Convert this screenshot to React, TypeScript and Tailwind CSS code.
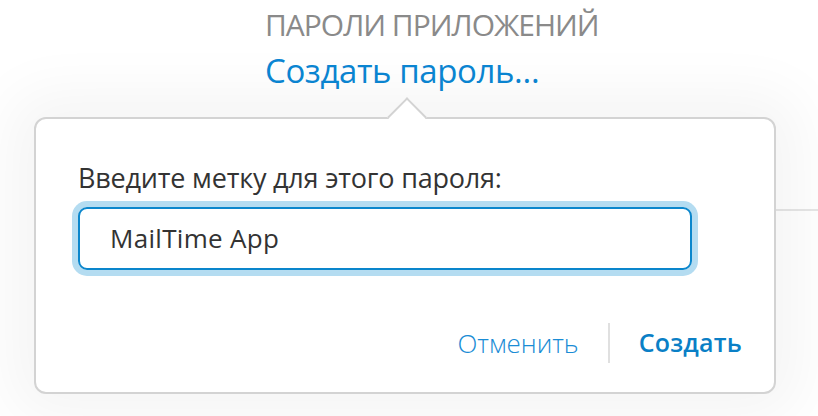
import React from "react";

export default function App() {
  const font = { fontFamily: '"Open Sans", "Noto Sans", sans-serif' };
  return (
    <div
      className="relative w-[818px] h-[416px] overflow-hidden bg-white"
      style={font}
    >
      {/* underlying page line to the right of the popover */}
      <div className="absolute left-[700px] right-0 top-[209px] h-[2px] bg-[#e6e6e6]" />

      <div className="relative flex flex-col pl-[265px] pt-[5px]">
        <div className="text-[30px] leading-[40px] text-[#8a8a8a] tracking-[-1.0px]">
          ПАРОЛИ ПРИЛОЖЕНИЙ
        </div>
        <div className="mt-[4px] text-[33px] leading-[44px] text-[#0b86d3] tracking-[-0.4px]">
          Создать пароль…
        </div>
      </div>

      <div className="relative ml-[34px] mt-[24px] w-[742px] h-[277px] rounded-[12px] border-2 border-[#d3d3d3] bg-white shadow-[0_0_60px_25px_rgba(0,0,0,0.045)]">
        {/* arrow */}
        <div className="absolute left-[357px] top-[-16px] w-[28px] h-[28px] rotate-45 border-l-2 border-t-2 border-[#d3d3d3] bg-white" />
        <div className="relative flex flex-col pl-[42px] pt-[42px] pr-[82px]">
          <div className="text-[27px] leading-[34px] text-[#333] tracking-[-0.2px]">
            Введите метку для этого пароля:
          </div>
          <div className="mt-[12px] h-[63px] rounded-[9px] border-2 border-[#0a86cc] ring-[6px] ring-[#b4dcf1] flex items-center pl-[30px]">
            <span className="text-[26px] text-[#333] tracking-[0.3px]">MailTime App</span>
          </div>
          <div className="mt-[53px] flex items-center justify-end mr-[-50px]">
            <span className="text-[26px] font-light text-[#1a8cd5] tracking-[0px]">Отменить</span>
            <div className="mx-[29px] w-[2px] h-[40px] bg-[#e0e0e0]" />
            <span className="text-[25px] font-semibold text-[#0a7fc6] tracking-[0.2px]">Создать</span>
          </div>
        </div>
      </div>
    </div>
  );
}
